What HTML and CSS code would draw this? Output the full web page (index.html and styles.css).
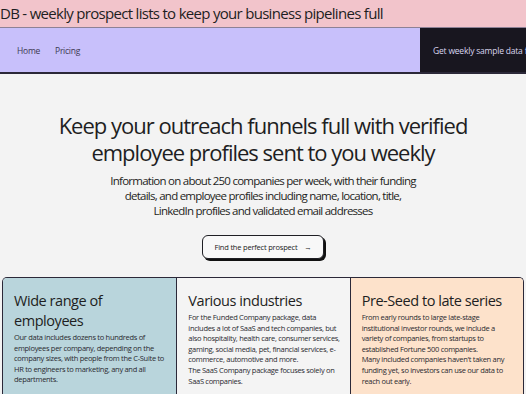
FILE: index.html
```html
<!DOCTYPE html>
<html>
<head>
  <title>Weekly prospect lists</title>
  <link rel="stylesheet" href="styles.css">
</head>
<body>
  <div class="topbar">DB - weekly prospect lists to keep your business pipelines full</div>
  <nav class="nav">
    <div class="nav-links">
      <a href="#">Home</a>
      <a href="#">Pricing</a>
    </div>
    <div class="nav-cta">Get weekly sample data for free</div>
  </nav>
  <main>
    <section class="hero">
      <h1>Keep your outreach funnels full with verified employee profiles sent to you weekly</h1>
      <p>Information on about 250 companies per week, with their funding details, and employee profiles including name, location, title, LinkedIn profiles and validated email addresses</p>
      <div class="hero-action">
        <a class="btn" href="#">Find the perfect prospect <span class="arrow">→</span></a>
      </div>
    </section>

    <section class="features">
      <div class="card card-blue">
        <h2>Wide range of employees</h2>
        <p>Our data includes dozens to hundreds of employees per company, depending on the company sizes, with people from the C-Suite to HR to engineers to marketing, any and all departments.</p>
      </div>
      <div class="card card-grey">
        <h2>Various industries</h2>
        <p>For the Funded Company package, data includes a lot of SaaS and tech companies, but also hospitality, health care, consumer services, gaming, social media, pet, financial services, e-commerce, automotive and more.</p>
        <p>The SaaS Company package focuses solely on SaaS companies.</p>
      </div>
      <div class="card card-peach">
        <h2>Pre-Seed to late series</h2>
        <p>From early rounds to large late-stage institutional investor rounds, we include a variety of companies, from startups to established Fortune 500 companies.</p>
        <p>Many included companies haven't taken any funding yet, so investors can use our data to reach out early.</p>
      </div>
    </section>
  </main>
</body>
</html>
```

FILE: styles.css
```css
body {
  font-family: "Open Sans", "Noto Sans", sans-serif;
  background-color: #f3f3f3;
  color: #1e1e22;
  margin: 0;
  padding: 0;
  overflow: hidden;
}
.topbar {
  background-color: #f2c4cb;
  height: 27px;
  line-height: 26px;
  font-size: 15px;
  letter-spacing: -0.7px;
  white-space: nowrap;
  overflow: hidden;
  border-bottom: 1px solid #8d8196;
}
.nav {
  display: flex;
  height: 44px;
  border-bottom: 2px solid #2b2838;
}
.nav-links {
  flex: 1;
  display: flex;
  align-items: center;
  gap: 15px;
  padding-left: 17px;
  background-color: #c8c0fb;
}
.nav-links a {
  color: #3d3852;
  text-decoration: none;
  font-size: 8.5px;
  letter-spacing: -0.25px;
}
.nav-cta {
  width: 93px;
  padding-left: 13px;
  display: flex;
  align-items: center;
  background-color: #18161f;
  color: #d9d5ee;
  font-size: 8.5px;
  letter-spacing: -0.2px;
  white-space: nowrap;
  overflow: hidden;
}
.hero {
  text-align: center;
  padding-top: 38px;
}
.hero h1 {
  font-size: 22px;
  font-weight: 400;
  line-height: 27px;
  letter-spacing: -1px;
  margin: 0 auto;
  width: 440px;
}
.hero p {
  font-size: 11.5px;
  line-height: 15px;
  letter-spacing: -0.75px;
  margin: 7px auto 0;
  width: 310px;
}
.hero-action {
  margin-top: 15px;
}
.btn {
  display: inline-block;
  height: 22px;
  line-height: 22px;
  padding: 0 11px;
  font-size: 7.5px;
  letter-spacing: -0.2px;
  color: #222;
  text-decoration: none;
  background-color: #f8f8f8;
  border: 1px solid #1f1f24;
  border-radius: 6px;
  box-shadow: 2px 2px 0 #111;
}
.arrow {
  margin-left: 5px;
}
.features {
  display: grid;
  grid-template-columns: repeat(3, 1fr);
  margin: 18px 2px 0;
  border: 1px solid #2b2838;
  border-bottom: 0;
  border-radius: 5px 5px 0 0;
  overflow: hidden;
}
.card {
  padding: 13px 6px 0 11px;
  height: 120px;
}
.card + .card {
  border-left: 1px solid #2b2838;
}
.card-blue {
  background-color: #b9d5dc;
}
.card-grey {
  background-color: #f4f4f4;
}
.card-peach {
  background-color: #fde2cb;
}
.card h2 {
  font-size: 14.5px;
  font-weight: 400;
  line-height: 20px;
  letter-spacing: -0.45px;
  margin: 0 0 1px;
}
.card p {
  font-size: 7.5px;
  line-height: 10.6px;
  letter-spacing: -0.3px;
  color: #2a2a30;
  margin: 0;
}
```
